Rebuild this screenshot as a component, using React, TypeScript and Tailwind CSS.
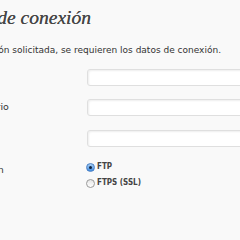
export default function App() {
  const rows = [
    { label: "Servidor", top: "mt-[13px]", shift: "ml-[-82px]" },
    { label: "Nombre de usuario", top: "mt-[13px]", shift: "ml-[-82px]" },
    { label: "Contraseña", top: "mt-[14px]", shift: "ml-[-82px]" },
  ];

  return (
    <div className="w-[240px] h-[240px] overflow-hidden bg-[#f9f9f9] text-[#333] font-['DejaVu_Sans',sans-serif]">
      {/* Heading, cut at the left edge */}
      <div className="w-[91px] flex justify-end overflow-hidden pt-[5px]">
        <h2 className="whitespace-nowrap font-['Liberation_Serif',serif] italic text-[19.5px] leading-[26px] text-[#464646] [text-shadow:0_0_0.4px_#464646]">
          Información de conexión
        </h2>
      </div>

      <div className="w-[221px] flex justify-end overflow-hidden mt-[13px]">
        <p className="whitespace-nowrap text-[9px] leading-[12px]">
          Para realizar la acción solicitada, se requieren los datos de conexión.
        </p>
      </div>

      {rows.map((r) => (
        <div key={r.label} className={`flex items-center ${r.top}`}>
          <div className="w-[87px] shrink-0 overflow-hidden">
            <span className={`block whitespace-nowrap text-[9.5px] ${r.shift}`}>{r.label}</span>
          </div>
          <div className="h-[17px] w-[170px] shrink-0 rounded-[3px] border border-[#dfdfdf] bg-white shadow-[inset_1px_1px_2px_rgba(0,0,0,0.07)]" />
        </div>
      ))}

      <div className="flex mt-[15px]">
        <div className="w-[86px] shrink-0 overflow-hidden pt-[1px]">
          <span className="block whitespace-nowrap text-[9.5px] ml-[-77px]">Tipo de conexión</span>
        </div>
        <div className="flex flex-col gap-[6px] text-[8px] font-semibold leading-[10px] text-[#444] font-['DejaVu_Sans_Condensed','DejaVu_Sans',sans-serif]">
          <label className="flex items-center gap-[2px]">
            <span className="w-[9px] h-[9px] rounded-full border border-[#4a7fc4] bg-gradient-to-b from-[#a9d0f5] to-[#3e8ce0] flex items-center justify-center">
              <span className="w-[3px] h-[3px] rounded-full bg-[#10203a]" />
            </span>
            FTP
          </label>
          <label className="flex items-center gap-[2px]">
            <span className="w-[9px] h-[9px] rounded-full border border-[#9a9a9a] bg-gradient-to-b from-[#e6e6e6] to-white" />
            FTPS (SSL)
          </label>
        </div>
      </div>
    </div>
  );
}
